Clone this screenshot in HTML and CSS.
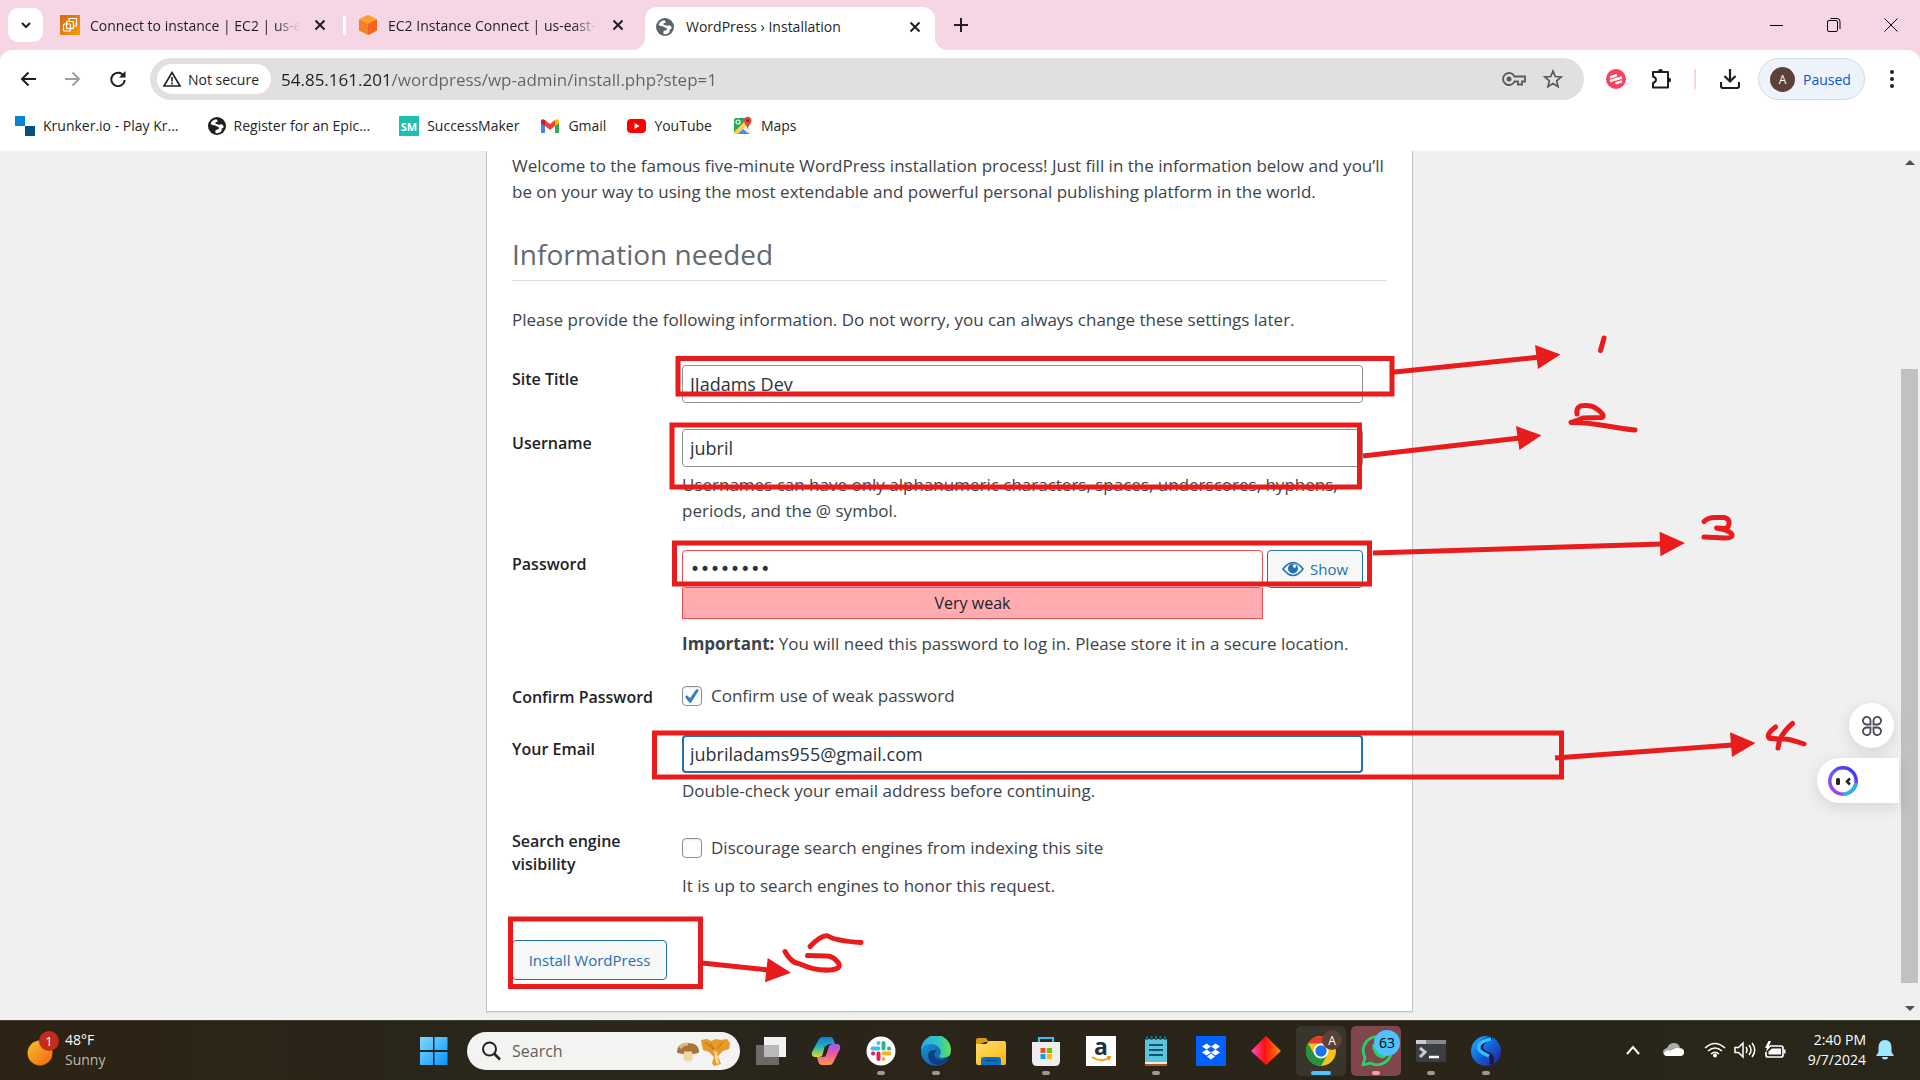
FILE: index.html
```html
<!DOCTYPE html>
<html lang="en">
<head>
<meta charset="utf-8">
<title>WordPress › Installation</title>
<link rel="stylesheet" href="styles.css">
</head>
<body>
<svg class="defs" aria-hidden="true">
  <defs>
    <linearGradient id="gOrange" x1="0" y1="0" x2="1" y2="1"><stop offset="0" stop-color="#d2691e"/><stop offset="1" stop-color="#fb9a00"/></linearGradient>
    <linearGradient id="gWin" x1="0" y1="0" x2="1" y2="1"><stop offset="0" stop-color="#7ddcff"/><stop offset="1" stop-color="#0a92ff"/></linearGradient>
    <linearGradient id="gSun" x1="0" y1="0" x2="1" y2="1"><stop offset="0" stop-color="#f6c02c"/><stop offset="1" stop-color="#f0660e"/></linearGradient>
    <linearGradient id="gRing" x1="1" y1="0" x2="0" y2="1"><stop offset="0" stop-color="#3b2cf0"/><stop offset="0.5" stop-color="#5a5cff"/><stop offset="1" stop-color="#b53be8"/></linearGradient>
    <linearGradient id="gEdge" x1="0" y1="0" x2="1" y2="0"><stop offset="0" stop-color="#2aa8e8"/><stop offset="0.6" stop-color="#2fc6c0"/><stop offset="1" stop-color="#6be14a"/></linearGradient>
    <linearGradient id="gEdge2" x1="0" y1="0" x2="1" y2="1"><stop offset="0" stop-color="#1b9de2"/><stop offset="1" stop-color="#0b4a94"/></linearGradient>
    <linearGradient id="gCopA" x1="0" y1="0" x2="0" y2="1"><stop offset="0" stop-color="#1579e0"/><stop offset="0.5" stop-color="#22b8b4"/><stop offset="1" stop-color="#e8d332"/></linearGradient>
    <linearGradient id="gCopB" x1="0" y1="0" x2="0" y2="1"><stop offset="0" stop-color="#9a5df0"/><stop offset="0.5" stop-color="#ee5a9a"/><stop offset="1" stop-color="#ff9a4a"/></linearGradient>
    <linearGradient id="gFold" x1="0" y1="0" x2="1" y2="1"><stop offset="0" stop-color="#ffdd6e"/><stop offset="1" stop-color="#fbb912"/></linearGradient>
    <linearGradient id="gDia" x1="0" y1="0" x2="1" y2="0"><stop offset="0" stop-color="#ff4fd0"/><stop offset="0.45" stop-color="#ff1010"/><stop offset="1" stop-color="#ff8a10"/></linearGradient>
    <linearGradient id="gBall" x1="0" y1="0" x2="1" y2="1"><stop offset="0" stop-color="#1ab4ff"/><stop offset="0.5" stop-color="#1461d8"/><stop offset="1" stop-color="#2a1680"/></linearGradient>
    <symbol id="globe" viewBox="0 0 20 20"><circle cx="10" cy="10" r="10" fill="currentColor"/><path d="M9.5 2.600C6 3 3.500 5 3 7.500q1.500 2 4.500 1.700l2.500 1.300q2.200.3 2.200 1.800 0 1.200-1.700 1.700l-2 .5q-.8 1.500 0 3.200 3 .8 5.700-.9 1.500-2 1-3.800l2.300-1.700q-.2-2.300-2.500-3.200l-2.800.4q-1.700-.5-3.700-1-.8-1 .2-1.800l2.300-.7z" fill="#fff"/></symbol>
    <symbol id="x" viewBox="0 0 12 12"><path d="M1.500 1.500l9 9M10.500 1.500l-9 9" stroke="#1f1f1f" stroke-width="2" fill="none"/></symbol>
  </defs>
</svg>

<div class="screen">
  <header class="tabs">
    <button class="tab-search" aria-label="Search tabs"><svg width="12" height="12" viewBox="0 0 12 12"><path d="M2 4l4 4 4-4" fill="none" stroke="#1f1f1f" stroke-width="2"/></svg></button>
    <div class="tab tab--first">
      <svg width="20" height="20" viewBox="0 0 20 20"><rect width="20" height="20" fill="url(#gOrange)"/><g fill="none" stroke="#fff" stroke-width="1.200"><rect x="3.500" y="9" width="7" height="7" rx="1"/><rect x="6.500" y="6.500" width="7" height="7" rx="1"/><path d="M9 6V3.500h7.500V11H14"/></g></svg>
      <span class="tab-title tab-title--fade">Connect to instance | EC2 | us-east-1</span>
      <button class="icon-btn" aria-label="Close tab"><svg width="12" height="12"><use href="#x"/></svg></button>
    </div>
    <span class="tab-sep"></span>
    <div class="tab tab--second">
      <svg width="20" height="20" viewBox="0 0 20 20"><path d="M10 0l9 4.500v11L10 20l-9-4.500v-11z" fill="#f58220"/><path d="M10 0l9 4.500L10 9 1 4.500z" fill="#ff9d2e"/><path d="M10 9l9-4.500v11L10 20z" fill="#f0641e"/></svg>
      <span class="tab-title tab-title--fade">EC2 Instance Connect | us-east-1</span>
      <button class="icon-btn" aria-label="Close tab"><svg width="12" height="12"><use href="#x"/></svg></button>
    </div>
    <div class="tab tab--active">
      <svg class="gray" width="18" height="18"><use href="#globe"/></svg>
      <span class="tab-title">WordPress › Installation</span>
      <button class="icon-btn" aria-label="Close tab"><svg width="12" height="12"><use href="#x"/></svg></button>
    </div>
    <button class="icon-btn new-tab" aria-label="New tab"><svg width="14" height="14" viewBox="0 0 14 14"><path d="M7 0v14M0 7h14" stroke="#1f1f1f" stroke-width="2"/></svg></button>
    <div class="win-controls">
      <button class="icon-btn" aria-label="Minimize"><svg width="14" height="14" viewBox="0 0 14 14"><path d="M0 7.500h13" stroke="#000"/></svg></button>
      <button class="icon-btn" aria-label="Restore"><svg width="14" height="14" viewBox="0 0 14 14"><g fill="none" stroke="#000"><rect x=".5" y="2.500" width="10" height="11" rx="1.500"/><path d="M3.500.5H10q3 0 3 3V11"/></g></svg></button>
      <button class="icon-btn" aria-label="Close"><svg width="14" height="14" viewBox="0 0 14 14"><path d="M.5.5l13 13M13.500.5l-13 13" stroke="#000" fill="none"/></svg></button>
    </div>
  </header>

  <div class="chrome">
    <div class="toolbar">
      <button class="icon-btn" aria-label="Back"><svg width="16" height="16" viewBox="0 0 16 16"><path d="M16 8H2M8.500 1.500L2 8l6.500 6.500" fill="none" stroke="#1f1f1f" stroke-width="2"/></svg></button>
      <button class="icon-btn" aria-label="Forward"><svg width="16" height="16" viewBox="0 0 16 16"><path d="M0 8h14M7.500 1.500L14 8l-6.500 6.500" fill="none" stroke="#a0a0a0" stroke-width="2"/></svg></button>
      <button class="icon-btn" aria-label="Reload"><svg width="16" height="16" viewBox="0 0 16 16"><path d="M13.800 5A6.700 6.700 0 1 0 14.700 9" fill="none" stroke="#1f1f1f" stroke-width="2"/><path d="M15.500 0v6.500H9z" fill="#1f1f1f"/></svg></button>
      <div class="address">
        <button class="secure"><svg width="18" height="16" viewBox="0 0 18 16"><path d="M9 1.500L17 15H1z" fill="none" stroke="#1f1f1f" stroke-width="1.600"/><path d="M9 6v4.500M9 11.500v2" stroke="#1f1f1f" stroke-width="1.600"/></svg>Not secure</button>
        <input class="url" aria-label="Address" value="54.85.161.201/wordpress/wp-admin/install.php?step=1">
        <button class="icon-btn" aria-label="Passwords"><svg width="24" height="16" viewBox="0 0 24 16"><path d="M12.500 5.500A6 6 0 1 0 12.500 10.500H16v3h4v-3h3v-5z" fill="none" stroke="#5a5a5a" stroke-width="1.800"/><circle cx="7" cy="8" r="2.500" fill="#5a5a5a"/></svg></button>
        <button class="icon-btn star" aria-label="Bookmark"><svg width="20" height="20" viewBox="0 0 20 20"><path d="M10 2l2.300 5.500 5.900.5-4.500 3.900 1.400 5.800L10 14.600l-5.100 3.100 1.400-5.800L1.800 8l5.900-.5z" fill="none" stroke="#5a5a5a" stroke-width="1.700"/></svg></button>
      </div>
      <div class="tools">
        <button class="icon-btn" aria-label="Extension"><svg width="20" height="20" viewBox="0 0 20 20"><circle cx="10" cy="10" r="10" fill="#fb3d5e"/><path d="M4 8.500l7-2.500M4 12l12-3.500M9.500 14.300l6.500-2" stroke="#fff" stroke-width="2.400" fill="none"/></svg></button>
        <button class="icon-btn" aria-label="Extensions"><svg width="22" height="22" viewBox="0 0 22 22"><path d="M3 4h15v15.500H3v-4.500q3-1 3-3.200T3 8.500z" fill="none" stroke="#1f1f1f" stroke-width="2" stroke-linejoin="round"/><path d="M8 4q0-3 2.500-3T13 4zM18 9.500q3 0 3 2.500t-3 2.500z" fill="#1f1f1f"/></svg></button>
        <span class="tool-sep"></span>
        <button class="icon-btn" aria-label="Downloads"><svg width="20" height="20" viewBox="0 0 20 20"><path d="M10 0v12M4.500 7l5.500 5.500L15.500 7M1 13v4q0 2 2 2h14q2 0 2-2v-4" fill="none" stroke="#1f1f1f" stroke-width="2.200"/></svg></button>
        <button class="profile"><span class="avatar">A</span>Paused</button>
        <button class="icon-btn" aria-label="Menu"><svg width="6" height="20" viewBox="0 0 6 20"><g fill="#1f1f1f"><circle cx="3" cy="3" r="2"/><circle cx="3" cy="10" r="2"/><circle cx="3" cy="17" r="2"/></g></svg></button>
      </div>
    </div>
    <nav class="bookmarks">
      <a class="long" href="#"><svg width="20" height="20" viewBox="0 0 20 20"><path d="M0 0h10v10H0z" fill="#0784d1"/><path d="M10 10h10v10H10z" fill="#04507f"/></svg>Krunker.io - Play Kr...</a>
      <a class="long" href="#"><svg width="18" height="18"><use href="#globe"/></svg>Register for an Epic...</a>
      <a href="#"><svg width="20" height="20" viewBox="0 0 20 20"><rect width="20" height="20" fill="#1fbfb0"/><text x="10" y="15" text-anchor="middle" class="sm">SM</text></svg>SuccessMaker</a>
      <a href="#"><svg width="20" height="16" viewBox="0 0 20 16"><path d="M1 3v12h4V6z" fill="#4285f4"/><path d="M19 3v12h-4V6z" fill="#34a853"/><path d="M5 2v6l5 4 5-4V2l-5 4z" fill="#ea4335"/><path d="M1 3q0-3 4-1v6L1 5z" fill="#c5221f"/><path d="M19 3q0-3-4-1v6l4-3z" fill="#fbbc04"/></svg>Gmail</a>
      <a href="#"><svg width="19" height="14" viewBox="0 0 19 14"><rect width="19" height="14" rx="4" fill="#f00"/><path d="M7.500 4v6l5-3z" fill="#fff"/></svg>YouTube</a>
      <a href="#"><svg width="20" height="20" viewBox="0 0 20 20"><rect x="1" y="2" width="16" height="16" rx="2" fill="#2fa35a"/><path d="M2 18L14 6l3 2v9z" fill="#e8eaed"/><path d="M1 16L13 4l3 3L5 18H2z" fill="#fbd04a"/><path d="M5 18l5-5 6 5z" fill="#4a86f0"/><circle cx="5" cy="6" r="2" fill="none" stroke="#fff" stroke-width="1.200"/><path d="M14.500 13C14 9 11 8 11 4.500a3.700 3.700 0 0 1 7.500 0C18.500 8 15.500 9 14.500 13z" fill="#dd4b3e"/><circle cx="14.700" cy="4.500" r="1.300" fill="#7d1f17"/></svg>Maps</a>
    </nav>
  </div>

  <main class="page">
    <div class="view">
      <form class="card">
        <p>Welcome to the famous five-minute WordPress installation process! Just fill in the information below and you’ll be on your way to using the most extendable and powerful personal publishing platform in the world.</p>
        <h1>Information needed</h1>
        <p>Please provide the following information. Do not worry, you can always change these settings later.</p>
        <div class="fields">
          <div class="field">
            <label class="name" for="title">Site Title</label>
            <div><input class="text" id="title" value="JJadams Dev"></div>
          </div>
          <div class="field">
            <label class="name" for="user">Username</label>
            <div><input class="text" id="user" value="jubril"><p class="help">Usernames can have only alphanumeric characters, spaces, underscores, hyphens, periods, and the @ symbol.</p></div>
          </div>
          <div class="field">
            <label class="name" for="pass">Password</label>
            <div>
              <div class="pass-row">
                <div class="pass-col"><input class="text text--bad" id="pass" type="password" value="jubril12"><div class="strength">Very weak</div></div>
                <button type="button" class="button show"><svg width="22" height="16" viewBox="0 0 22 16"><path d="M1 8Q11-5 21 8 11 21 1 8z" fill="none" stroke="#2271b1" stroke-width="1.600"/><circle cx="11" cy="7.500" r="5" fill="#2271b1"/><circle cx="12.500" cy="5" r="1.700" fill="#fff"/></svg>Show</button>
              </div>
              <p class="note"><strong>Important:</strong> You will need this password to log in. Please store it in a secure location.</p>
            </div>
          </div>
          <div class="field">
            <span class="name">Confirm Password</span>
            <label class="check"><input type="checkbox" checked>Confirm use of weak password</label>
          </div>
          <div class="field">
            <label class="name" for="email">Your Email</label>
            <div><input class="text text--focus" id="email" value="jubriladams955@gmail.com"><p class="help">Double-check your email address before continuing.</p></div>
          </div>
          <div class="field field--tall">
            <span class="name">Search engine visibility</span>
            <div><label class="check"><input type="checkbox">Discourage search engines from indexing this site</label><p class="note">It is up to search engines to honor this request.</p></div>
          </div>
        </div>
        <button type="button" class="button install">Install WordPress</button>
        <svg class="marks" width="1430" height="860" viewBox="487 151 1430 860" aria-hidden="true">
          <g fill="none" stroke="#e81c1c" stroke-width="5">
            <rect x="678" y="358.500" width="714" height="35.500"/>
            <rect x="672" y="425" width="687.500" height="62"/>
            <rect x="674.500" y="543" width="695" height="41"/>
            <rect x="654.500" y="733" width="907" height="44"/>
            <rect x="510.500" y="919" width="190" height="67.500"/>
            <path d="M1390 372.500L1540 357M1363 456L1520 438M1373 553L1662 544M1555 758L1733 745M702 963L768 970"/>
            <g stroke-linecap="round" stroke-linejoin="round">
              <path d="M1604 338L1600.500 350.500"/>
              <path d="M1577 414Q1576 405.500 1584 405.500Q1592 405 1597 409Q1606 416 1602 417.500L1583 418Q1577 421 1571 422.500C1595 422 1606 427 1635 430"/>
              <path d="M1704 521.500Q1708 517.500 1715 517.500H1724Q1730 519 1729 524Q1728 529 1724 528.500L1716.500 528Q1733 531 1732 536Q1731 538 1725 538L1704 537"/>
              <path d="M1775.500 727Q1766 734 1769 738Q1773 739 1784 739Q1790 739 1804 744M1792.500 723.500Q1779 735 1778 748"/>
              <path d="M810 946.500Q822 934 828 936Q836 941 861 942.500M785 951.500Q791 963 800 964Q815 971 830 970Q842 969 838.500 963Q833 955 825 956L807.500 955.500"/>
            </g>
          </g>
          <path fill="#e81c1c" d="M1560.500 354.500L1535 345l3 24zM1541.500 435.300L1516 426l3.400 24zM1685 543l-25.400-11.300.8 24.600zM1755.500 743L1730 732.300l2 24.700zM791 972.700L767.700 958l-2.700 24.300z"/>
        </svg>
      </form>
      <div class="float float--round"><svg width="20" height="20" viewBox="0 0 20 20"><g fill="none" stroke="#4b4b55" stroke-width="1.800"><path d="M8.500 8.500H5A3.800 3.800 0 1 1 8.500 5zM11.500 8.500H15A3.800 3.800 0 1 0 11.500 5zM8.500 11.500H5A3.800 3.800 0 1 0 8.500 15zM11.500 11.500H15A3.800 3.800 0 1 1 11.500 15z"/></g></svg></div>
      <div class="float float--side"><svg width="30" height="30" viewBox="0 0 30 30"><circle cx="15" cy="15" r="13.200" fill="#fff" stroke="url(#gRing)" stroke-width="3.500"/><path d="M15 28.200A13.200 13.200 0 0 0 28 17" fill="none" stroke="#27b6e6" stroke-width="3.500"/><rect x="8" y="12" width="4" height="7" rx="1.500" fill="#222"/><path d="M22 12.500l-3 3 3 3" fill="none" stroke="#222" stroke-width="2.500"/></svg></div>
    </div>
    <div class="scrollbar">
      <svg width="10" height="5" viewBox="0 0 10 5"><path d="M0 5l5-5 5 5z" fill="#505050"/></svg>
      <div class="track"><div class="thumb"></div></div>
      <svg width="10" height="5" viewBox="0 0 10 5"><path d="M0 0l5 5 5-5z" fill="#505050"/></svg>
    </div>
  </main>

  <footer class="taskbar">
    <div class="weather">
      <svg width="32" height="42" viewBox="0 0 32 42"><circle cx="13" cy="28" r="12.500" fill="url(#gSun)"/><circle cx="22" cy="16" r="10" fill="#c42b1c"/><text x="22" y="21" text-anchor="middle" class="badge">1</text></svg>
      <div><div>48°F</div><div class="dim">Sunny</div></div>
    </div>
    <div class="dock">
      <button class="app" aria-label="Start"><svg width="30" height="30" viewBox="0 0 30 30"><path d="M1 1h13v13H1zM15.500 1h13v13h-13zM1 16h13v13H1zM15.500 16h13v13h-13z" fill="url(#gWin)"/></svg></button>
      <label class="search">
        <svg width="20" height="20" viewBox="0 0 20 20"><circle cx="8.500" cy="8" r="6.500" fill="none" stroke="#222" stroke-width="2"/><path d="M13 12.500l6 6" stroke="#222" stroke-width="2.500"/></svg>
        <input placeholder="Search" aria-label="Search">
        <svg width="54" height="30" viewBox="0 0 54 30"><path d="M1 16Q1 7 11.500 7 23 7 23 16q0 2-11 2T1 16z" fill="#a8743c"/><path d="M4 12q3-4 8-4" stroke="#e0b880" stroke-width="3" fill="none"/><path d="M8 15.500h8l1 8q-5 4-9.500 0z" fill="#f0d6a0"/><path d="M25 4l6-1 4 2 5-2 5 1 6-1 3 4-1 6-6 2-5 5 3 8-7 2-2-3 2-6-5-5-6-2z" fill="#e89a28"/><path d="M38 15l2 12 3 1-2-12z" fill="#f9dc95"/><path d="M29 6l8 7M34 7l4 6M47 6l-6 7" fill="none" stroke="#b86d12"/></svg>
      </label>
      <button class="app" aria-label="Task view"><svg width="30" height="30" viewBox="0 0 30 30"><rect x="8" y="1" width="22" height="20" fill="#f2f2f2"/><rect y="9" width="23" height="20" fill="#777" opacity=".85"/><rect x="8" y="9" width="15" height="12" fill="#b9b9b9"/></svg></button>
      <button class="app" aria-label="Copilot"><svg width="30" height="30" viewBox="0 0 30 30"><path d="M8 3Q9 1 12 1h7q3 0 4 4l1 3h-5q-3 0-4 3l-3 8q-1 2-4 2H4q-4 0-3-5z" fill="url(#gCopA)"/><path d="M22 27q-1 2-4 2h-7q-3 0-4-4l-1-4h5q3 0 4-3l3-8q1-2 4-2h4q4 0 3 5z" fill="url(#gCopB)"/><path d="M14 10h4l-3.500 10.500H11z" fill="#29261b"/></svg></button>
      <button class="app run" aria-label="Slack"><svg width="30" height="30" viewBox="0 0 30 30"><circle cx="15" cy="15" r="14.500" fill="#fff"/><g stroke-width="4" stroke-linecap="round"><path d="M12.500 7v.1M6.500 12.500h6" stroke="#36c5f0"/><path d="M17.500 7v5.500M23 12.500h.1" stroke="#2eb67d"/><path d="M17.500 17.500H23.500M17.500 23v.1" stroke="#ecb22e"/><path d="M12.500 17.500V23M7 17.500h.1" stroke="#e01e5a"/></g></svg></button>
      <button class="app run" aria-label="Edge"><svg width="30" height="30" viewBox="0 0 30 30"><circle cx="15" cy="15" r="15" fill="url(#gEdge2)"/><path d="M0 14A15 15 0 0 1 30 14q0 8-8 8-4 0-4-2 3-3 1-7-3-5-9-5-7 0-10 6z" fill="url(#gEdge)"/><path d="M28 22Q20 26 15 22q-4-4 1-8-9-1-9 6 1 8 9 9 8 0 12-7z" fill="#0c3f80"/><path d="M18 20q3 4 11 0l1-3v4q-7 4-12-1z" fill="#2b2319"/></svg></button>
      <button class="app" aria-label="File Explorer"><svg width="30" height="30" viewBox="0 0 30 30"><path d="M0 4q0-2 2-2h8l3 4h-4l-9 4z" fill="#d89b0c"/><path d="M0 8h10l3-3h15q2 0 2 2v20q0 2-2 2H2q-2 0-2-2z" fill="url(#gFold)"/><path d="M5 29v-5q0-3 3-3h14q3 0 3 3v5z" fill="#0c70c4"/><path d="M9 24.500h12" stroke="#0a4c8c" stroke-width="1.500"/></svg></button>
      <button class="app run" aria-label="Store"><svg width="30" height="30" viewBox="0 0 30 30"><path d="M8 7V2h14v5" fill="none" stroke="#37bdf5" stroke-width="2.200"/><path d="M1 6h28v19q0 5-5 5H6q-5 0-5-5z" fill="#eee"/><path d="M9.500 12h5v5h-5z" fill="#f25022"/><path d="M16 12h5v5h-5z" fill="#7fba00"/><path d="M9.500 18h5v5h-5z" fill="#00a4ef"/><path d="M16 18h5v5h-5z" fill="#ffb900"/></svg></button>
      <button class="app" aria-label="Amazon"><svg width="30" height="30" viewBox="0 0 30 30"><rect width="30" height="30" fill="#fff"/><text x="15" y="19" text-anchor="middle" class="amz">a</text><path d="M6 21q9 6 17 1M21 21h3l-1 3" fill="none" stroke="#f90" stroke-width="1.800"/></svg></button>
      <button class="app run" aria-label="Notepad"><svg width="30" height="30" viewBox="0 0 30 30"><rect x="4" y="3" width="22" height="25" rx="1" fill="#5cc4da"/><path d="M4 26h22v2H4z" fill="#eee"/><path d="M4 28h22v2H4z" fill="#b5541a"/><path d="M8 9h14M8 14h14M8 19h14" stroke="#0b5568" stroke-width="2"/><path d="M6 0v4M10.500 0v4M15 0v4M19.500 0v4M24 0v4" stroke="#0f6c80" stroke-width="2.200"/></svg></button>
      <button class="app" aria-label="Dropbox"><svg width="30" height="30" viewBox="0 0 30 30"><rect width="30" height="30" fill="#0061fe"/><path d="M10.500 7.500L6 10.500l4.500 3 4.500-3zM19.500 7.500l-4.500 3 4.500 3 4.500-3zM10.500 13.500l-4.500 3 4.500 3 4.500-3zM19.500 13.500l-4.500 3 4.500 3 4.500-3zM15 17.500l-4 3 4 3 4-3z" fill="#fff"/></svg></button>
      <button class="app" aria-label="Diamond"><svg width="30" height="30" viewBox="0 0 30 30"><path d="M15 0l15 15-15 14L0 15z" fill="url(#gDia)"/></svg></button>
      <button class="app app--open" aria-label="Chrome"><svg width="36" height="36" viewBox="0 0 36 36"><circle cx="15" cy="21" r="15" fill="#fbc116"/><path d="M2 13.500A15 15 0 0 1 28 13.500H15z" fill="#e33b2e"/><path d="M2 13.500A15 15 0 0 0 15 36l6.500-11.500L8.500 24.500z" fill="#229342"/><circle cx="15" cy="21" r="7.500" fill="#fff"/><circle cx="15" cy="21" r="5.700" fill="#1a73e8"/><circle cx="26" cy="10" r="10" fill="#5d4037"/><text x="26" y="15" text-anchor="middle" class="mini">A</text></svg></button>
      <button class="app app--alert" aria-label="WhatsApp"><svg width="40" height="36" viewBox="0 0 40 36"><path d="M3 35l2-7.500A14 14 0 1 1 10.500 33z" fill="none" stroke="#25d366" stroke-width="2.800"/><path d="M12 15l3-2 2.500 4-1.500 2.500q2 3.500 5 4.500l2-2 4 2.500q-1 4-5 4-9-2-10-13.500z" fill="#25d366"/><circle cx="27" cy="13" r="13" fill="#4cc2ff"/><text x="27" y="18" text-anchor="middle" class="num">63</text></svg></button>
      <button class="app run" aria-label="Terminal"><svg width="30" height="30" viewBox="0 0 30 30"><rect y="4" width="30" height="22" rx="1" fill="#3c3f42"/><path d="M0 4h30v4H0z" fill="#888"/><path d="M0 4h10v4H0z" fill="#ccc"/><path d="M4 12l5 4-5 5" fill="none" stroke="#ccc" stroke-width="3"/><path d="M13 21h10" stroke="#fff" stroke-width="2.500"/></svg></button>
      <button class="app run" aria-label="Swift app"><svg width="30" height="30" viewBox="0 0 30 30"><circle cx="15" cy="15" r="15" fill="url(#gBall)"/><path d="M21 2Q9 5 10 12q1 4 9 7 3 2 1 9" fill="none" stroke="#17144f" stroke-width="4"/><path d="M20 3Q6 6 8 13q1 3 10 7" fill="none" stroke="#2cc4ff" stroke-width="3.500"/></svg></button>
    </div>
    <div class="tray">
      <svg width="14" height="10" viewBox="0 0 14 10"><path d="M1 9l6-7 6 7" fill="none" stroke="#fff" stroke-width="2"/></svg>
      <svg class="cloud" width="21" height="14" viewBox="0 0 21 14"><path d="M3 13q-3-1-3-4t4-4q2-5 7-5t6 5q4 0 4 4t-4 4z" fill="#aaa"/><path d="M3 13q-2-1-2-3 3-4 6-2l6-3q8 0 8 4t-4 4z" fill="#fff"/></svg>
      <svg width="22" height="16" viewBox="0 0 22 16"><g fill="none" stroke="#fff" stroke-width="1.500"><path d="M1 6Q11-3 21 6M4 9q7-6 14 0M7 12q4-3.500 8 0"/></g><circle cx="11" cy="13.500" r="2" fill="#fff"/></svg>
      <svg width="22" height="18" viewBox="0 0 22 18"><g fill="none" stroke="#fff" stroke-width="1.500"><path d="M1 6.500h3.500L9 2v14l-4.500-4.500H1zM12 6q2 3 0 6M15 4q4 5 0 10M18 2q5.500 7 0 14"/></g></svg>
      <svg width="22" height="18" viewBox="0 0 22 18"><path d="M6 5h11q2 0 2 2v7q0 2-2 2H4q-2 0-2-2v-3" fill="none" stroke="#fff" stroke-width="1.700"/><path d="M8 7.500h9v6H4.500v-3z" fill="#fff"/><path d="M20 8.500h1.500v4H20z" fill="#fff"/><path d="M4.500 0L1 7h2l-1 4 5-6H5l2-5z" fill="#fff"/></svg>
      <div class="clock"><div>2:40 PM</div><div>9/7/2024</div></div>
      <svg class="bell" width="18" height="20" viewBox="0 0 18 20"><path d="M9 0q6 0 6.500 7v5L18 16H0l2.500-4V7Q3 0 9 0zM6 17h6q0 2.500-3 2.500T6 17z" fill="#9be8ff"/></svg>
    </div>
  </footer>
</div>
</body>
</html>
```
FILE: styles.css
```css
* { box-sizing: border-box; }
body {
  margin: 0;
  font-family: "Open Sans", "Noto Sans", sans-serif;
  color: #3c434a;
}
button, input { font-family: inherit; }
button { border: 0; padding: 0; background: none; cursor: pointer; }
p, h1 { margin: 0; }
svg { display: block; flex: none; }
.defs { position: absolute; width: 0; height: 0; }

.screen { display: flex; flex-direction: column; height: 100vh; overflow: hidden; background: #f6d5e4; }
.icon-btn { display: flex; align-items: center; justify-content: center; flex: none; }

/* tab strip */
.tabs { display: flex; align-items: center; height: 50px; flex: none; font-size: 14px; color: #1f1f1f; }
.tab-search { display: flex; align-items: center; justify-content: center; width: 35px; height: 34px; margin-left: 8px; border-radius: 10px; background: #fff; }
.tab { display: flex; align-items: center; gap: 10px; height: 43px; }
.tab--first { width: 300px; padding: 0 17px; }
.tab--second { width: 299px; padding: 0 21px 0 12px; }
.tab--active { position: relative; align-self: flex-end; gap: 12px; width: 290px; padding: 0 14px 4px 11px; border-radius: 12px 12px 0 0; background: #fff; }
.tab--active::before, .tab--active::after { content: ""; position: absolute; bottom: 0; width: 14px; height: 14px; }
.tab--active::before { left: -14px; background: radial-gradient(circle at 0 0, #f6d5e4 14px, #fff 15px); }
.tab--active::after { right: -14px; background: radial-gradient(circle at 100% 0, #f6d5e4 14px, #fff 15px); }
.tab-title { flex: 1; overflow: hidden; white-space: nowrap; }
.tab-title--fade { -webkit-mask-image: linear-gradient(90deg, #000 88%, transparent); mask-image: linear-gradient(90deg, #000 88%, transparent); }
.tab-sep { width: 3px; height: 19px; background: #fff; }
.tab--first .icon-btn, .tab--second .icon-btn { margin-left: 4px; }
.gray { color: #5f6368; }
.new-tab { margin-left: 19px; }
.win-controls { display: flex; gap: 43px; margin-left: auto; padding-right: 22px; }

/* toolbar and bookmarks */
.chrome { flex: none; height: 101px; border-radius: 12px 12px 0 0; background: #fff; }
.toolbar { display: flex; align-items: center; height: 58px; padding-left: 20px; gap: 29px; }
.address { display: flex; align-items: center; flex: 1; height: 42px; margin-left: -5px; padding: 0 21px 0 7px; border-radius: 21px; background: #e0e0e0; }
.secure { display: flex; align-items: center; gap: 7px; height: 30px; padding: 0 12px 0 6px; border-radius: 15px; background: #fff; font-size: 14px; font-weight: 500; color: #1f1f1f; white-space: nowrap; }
.url { flex: 1; min-width: 0; margin-left: 10px; padding: 0; border: 0; outline: 0; font-size: 17px; color: transparent; background: linear-gradient(90deg, #1f1f1f 111px, #5f6368 111px); -webkit-background-clip: text; background-clip: text; }
.star { margin-left: 17px; }
.tools { display: flex; align-items: center; gap: 24px; padding-right: 25px; margin-left: -7px; }
.tool-sep { width: 2px; height: 20px; background: #f6d5e4; margin-left: -2px; }
.profile { display: flex; align-items: center; gap: 8px; height: 42px; width: 107px; padding: 0 11px; border: 1px solid #d3dbe5; border-radius: 21px; background: #edf3fb; font-size: 14px; color: #0b57d0; margin-left: -6px; }
.avatar { display: flex; align-items: center; justify-content: center; width: 25px; height: 25px; border-radius: 50%; background: #5d4037; color: #fff; font-size: 12px; }
.bookmarks { display: flex; align-items: center; height: 35px; padding-left: 15px; gap: 21px; font-size: 14px; }
.bookmarks a { display: flex; align-items: center; gap: 8px; color: #1f1f1f; text-decoration: none; white-space: nowrap; }
.bookmarks .long { margin-right: 8px; }
.sm { font: bold 11px "Open Sans", sans-serif; fill: #fff; }

/* page */
.page { flex: 1; min-height: 0; display: flex; overflow: hidden; background: #f0f0f1; }
.view { position: relative; flex: 1; min-width: 0; }
.card { position: relative; max-width: 927px; margin: 0 auto; padding: 2px 25px 31px; border: 1px solid #c3c4c7; border-top: 0; background: #fff; box-shadow: 0 1px 1px rgba(0, 0, 0, .06); font-size: 17px; line-height: 26px; }
.card h1 { margin: 25px 0 26px; height: 51px; border-bottom: 1px solid #dcdcde; font-size: 28px; font-weight: 400; line-height: 48px; color: #646970; }
.fields { display: grid; gap: 26px; margin: 32px 0 41px; }
.field { display: grid; grid-template-columns: 170px 1fr; padding-right: 24px; }
.name { padding: 3px 16px 0 0; font-weight: 600; font-size: 16px; line-height: 23px; color: #1d2327; }
.field--tall .name { padding-top: 0; }
.field--tall > div { padding-top: 5px; }
.text { display: block; width: 100%; height: 38px; padding: 0 7px; border: 1px solid #8c8f94; border-radius: 4px; outline: 0; background: #fff; font-size: 18px; color: #2c3338; }
.text--bad { border-color: #e65054; font-family: "DejaVu Sans", sans-serif; font-size: 17px; }
.text--focus { border: 2px solid #2271b1; padding: 0 6px; }
.help { margin-top: 5px; margin-right: -20px; }
.note { margin-top: 12px; margin-right: -20px; }
.pass-row { display: flex; align-items: flex-start; gap: 4px; }
.pass-col { flex: 1; }
.strength { height: 31px; border: 1px solid #e65054; border-top: 0; background: #ffabaf; text-align: center; line-height: 30px; font-size: 16px; color: #1d2327; }
.check { display: flex; align-items: center; gap: 9px; }
.check input { appearance: none; display: grid; place-items: center; width: 20px; height: 20px; margin: 0; border: 1px solid #8c8f94; border-radius: 4px; background: #fff; box-shadow: inset 0 1px 2px rgba(0, 0, 0, .1); }
.check input:checked::before { content: ""; width: 14px; height: 14px; background: #3582c4; clip-path: polygon(0 58%, 14% 44%, 36% 64%, 82% 0, 100% 8%, 42% 100%, 30% 96%); }
.button { display: flex; align-items: center; justify-content: center; border: 1px solid #2271b1; border-radius: 4px; background: #f6f7f7; color: #2271b1; font-size: 15px; }
.show { gap: 6px; width: 96px; height: 38px; }
.install { width: 155px; height: 40px; }
.marks { position: absolute; left: 0; top: 0; overflow: visible; pointer-events: none; z-index: 1; }

.float { position: absolute; display: flex; align-items: center; background: #fff; box-shadow: 0 4px 16px rgba(0, 0, 0, .12); height: 45px; }
.float--round { right: 5px; top: 552px; width: 45px; justify-content: center; border-radius: 50%; }
.float--side { right: 0; top: 607px; width: 82px; padding-left: 11px; border-radius: 23px 0 0 23px; }
.scrollbar { display: flex; flex-direction: column; align-items: center; width: 21px; padding: 9px 0; }
.track { flex: 1; width: 100%; padding: 0 2px; display: flex; flex-direction: column; justify-content: flex-end; }
.thumb { height: 73%; margin-bottom: 23px; background: #c1c1c1; }

/* taskbar */
.taskbar { position: relative; z-index: 2; display: grid; grid-template-columns: 1fr auto 1fr; align-items: center; flex: none; height: 60px; border-top: 1px solid #454037; background: linear-gradient(90deg, #2d2315, #29261b 30%, #2b2318 60%, #28261a); color: #fff; font-size: 14px; line-height: 20px; }
.weather { display: flex; align-items: center; gap: 6px; padding: 0 0 2px 27px; }
.weather svg { margin-bottom: 8px; }
.dim { color: #bdb9b2; }
.badge { font: 13px "Open Sans", sans-serif; fill: #fff; }
.dock { display: flex; align-items: center; gap: 5px; }
.app { position: relative; display: flex; align-items: center; justify-content: center; width: 50px; height: 50px; border-radius: 5px; }
.run::after, .app--open::after, .app--alert::after { content: ""; position: absolute; bottom: 1px; width: 8px; height: 4px; border-radius: 2px; background: #9c9993; }
.app--open { background: #37352c; }
.app--open::after { width: 20px; background: #4cc2ff; }
.app--open svg { margin: -6px 0 0 6px; }
.app--alert { background: #81464b; }
.app--alert::after { background: #ff99a4; }
.app--alert svg { margin: -6px 0 0 8px; }
.search { display: flex; align-items: center; width: 273px; height: 38px; margin: 0 1px 0 3px; padding: 0 10px 0 14px; border-radius: 19px; background: #f3f3f2; }
.search input { flex: 1; min-width: 0; margin-left: 11px; padding: 0; border: 0; outline: 0; background: none; font-size: 16px; }
.search input::placeholder { color: #5f5f5f; }
.tray { display: flex; align-items: center; justify-content: flex-end; gap: 8px; padding: 0 26px 2px 0; }
.cloud { margin: 0 12px 0 15px; }
.clock { width: 74px; margin-left: -2px; text-align: right; white-space: nowrap; }
.bell { margin-left: 2px; }
.amz { font: bold 23px "Open Sans", sans-serif; fill: #222f3e; }
.mini { font: 12px "Open Sans", sans-serif; fill: #fff; }
.num { font: 14px "Open Sans", sans-serif; fill: #000; }
```
